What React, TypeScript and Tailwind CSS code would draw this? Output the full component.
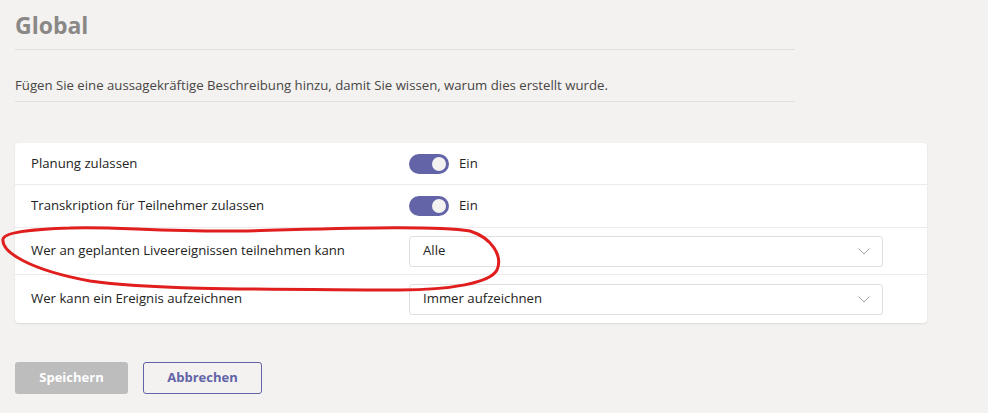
import React from 'react';

// ── Toggle ──────────────────────────────────────────────────────────────────

function Toggle({ label }: { label: string }) {
  return (
    <div className="flex items-center gap-[10px]">
      <div className="w-[40px] h-[20px] rounded-full bg-[#6264a7] flex items-center justify-end px-[3px]">
        <div className="size-[14px] rounded-full bg-[#f3f2f1]" />
      </div>
      <span className="text-[13.2px] text-[#252423]">{label}</span>
    </div>
  );
}

// ── Select ──────────────────────────────────────────────────────────────────

function Select({ value }: { value: string }) {
  return (
    <div className="w-[474px] h-[31px] bg-white border border-[#e1dfdd] rounded-[3px] flex items-center justify-between pl-[13px] pr-[12px]">
      <span className="text-[13.2px] text-[#252423]">{value}</span>
      <svg width="12" height="7" viewBox="0 0 12 7" fill="none">
        <path d="M0.5 0.5 L6 6 L11.5 0.5" stroke="#a19f9d" strokeWidth="1" />
      </svg>
    </div>
  );
}

// ── Row ─────────────────────────────────────────────────────────────────────

function Row({ label, children, h, last }: { label: string; children: React.ReactNode; h: string; last?: boolean }) {
  return (
    <div className={`flex items-center ${h} ${last ? '' : 'border-b border-[#edebe9]'}`}>
      <div className="w-[394px] pl-[16px] text-[13.2px] text-[#252423]">{label}</div>
      {children}
    </div>
  );
}

export default function App() {
  return (
    <div
      className="relative w-[988px] h-[413px] bg-[#f3f2f1] pl-[15px] overflow-hidden"
      style={{ fontFamily: '"Open Sans", "Noto Sans", sans-serif' }}
    >
      <div className="w-[780px] pt-[10px] pb-[9px] border-b border-[#e1dfdd]">
        <h1 className="text-[23px] font-bold text-[#8a8886] leading-[30px]">Global</h1>
      </div>
      <div className="w-[780px] pt-[27px] pb-[8px] border-b border-[#e1dfdd]">
        <p className="text-[13.2px] text-[#484644] leading-[16px]">
          Fügen Sie eine aussagekräftige Beschreibung hinzu, damit Sie wissen, warum dies erstellt wurde.
        </p>
      </div>

      <div className="mt-[41px] w-[912px] bg-white rounded-[4px] shadow-[0_1px_2px_rgba(0,0,0,0.1)]">
        <Row label="Planung zulassen" h="h-[42px]">
          <Toggle label="Ein" />
        </Row>
        <Row label="Transkription für Teilnehmer zulassen" h="h-[43px]">
          <Toggle label="Ein" />
        </Row>
        <Row label="Wer an geplanten Liveereignissen teilnehmen kann" h="h-[47px]">
          <Select value="Alle" />
        </Row>
        <Row label="Wer kann ein Ereignis aufzeichnen" h="h-[48px]" last>
          <Select value="Immer aufzeichnen" />
        </Row>
      </div>

      <div className="mt-[39px] flex gap-[15px]">
        <button className="w-[113px] h-[32px] rounded-[3px] bg-[#bdbdbd] text-white text-[13px] font-bold">
          Speichern
        </button>
        <button className="w-[119px] h-[32px] rounded-[3px] border border-[#6264a7] text-[#6264a7] text-[13px] font-bold">
          Abbrechen
        </button>
      </div>

      {/* hand-drawn red annotation */}
      <svg className="absolute left-0 top-0 pointer-events-none" width="988" height="413" viewBox="0 0 988 413" fill="none">
        <path
          d="M70 228 C40 229 5 231 3 239 C1 252 30 270 90 281 C160 291 300 289 400 290 C450 290 490 283 497 270 C503 256 492 238 470 231 C430 225 330 229 240 231 C160 232 110 226 70 228"
          stroke="#e01e1e"
          strokeWidth="3"
          strokeLinecap="round"
        />
      </svg>
    </div>
  );
}
